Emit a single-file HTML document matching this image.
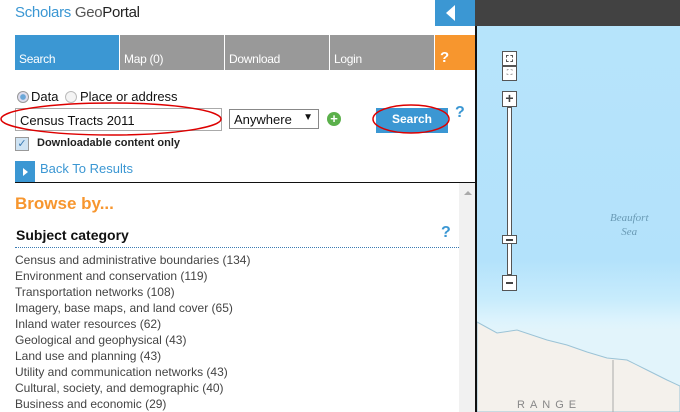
<!DOCTYPE html>
<html><head><meta charset="utf-8"><style>
*{margin:0;padding:0;box-sizing:border-box}
body{width:680px;height:412px;overflow:hidden;position:relative;background:#fff;font-family:"Liberation Sans",Arial,sans-serif}
.a{position:absolute}
.tab{position:absolute;top:35px;height:35px;color:#fff;font-size:12px;padding:17px 0 0 4px;letter-spacing:-0.3px}
.li{font-size:12px;color:#444;line-height:16px}
.zb{position:absolute;left:502px;width:15px;background:#fff;border:1px solid #555}
</style></head><body>
<div class="a" style="left:15px;top:4px;font-size:15px;color:#3b97d3;letter-spacing:-0.3px">Scholars <span style="color:#555">Geo</span><span style="color:#222">Portal</span></div>
<div class="a" style="left:435px;top:0;width:40px;height:26px;background:#3b97d3"></div>
<div class="a" style="left:446px;top:5px;width:0;height:0;border-top:8px solid transparent;border-bottom:8px solid transparent;border-right:9px solid #fff"></div>
<div class="tab" style="left:15px;width:104px;background:#3b97d3">Search</div>
<div class="tab" style="left:120px;width:104px;background:#999">Map (0)</div>
<div class="tab" style="left:225px;width:104px;background:#999">Download</div>
<div class="tab" style="left:330px;width:104px;background:#999">Login</div>
<div class="tab" style="left:435px;width:40px;background:#f7962e;font-weight:bold;font-size:15px;padding:14px 0 0 5px">?</div>
<div class="a" style="left:17px;top:91px;width:12px;height:12px;border-radius:50%;border:1px solid #999;background:radial-gradient(#6aa7d8 35%,#dde 45%)"></div>
<div class="a" style="left:31px;top:89px;font-size:13px;color:#111">Data</div>
<div class="a" style="left:65px;top:91px;width:12px;height:12px;border-radius:50%;border:1px solid #bbb;background:#f4f4f4"></div>
<div class="a" style="left:80px;top:89px;font-size:13px;color:#111">Place or address</div>
<div class="a" style="left:15px;top:108px;width:207px;height:23px;border:1px solid #aaa;font-size:13px;padding:4px 0 0 4px;color:#111">Census Tracts 2011</div>
<div class="a" style="left:229px;top:109px;width:90px;height:20px;border:1px solid #888;font-size:13px;padding:2px 0 0 4px;color:#111">Anywhere<span style="position:absolute;right:5px;top:2px;font-size:10px">▼</span></div>
<div class="a" style="left:327px;top:112px;width:14px;height:14px;border-radius:50%;background:#5bb04b;color:#fff;font-size:13px;font-weight:bold;text-align:center;line-height:14px">+</div>
<div class="a" style="left:376px;top:108px;width:72px;height:25px;background:#3b97d3;color:#fff;font-weight:bold;font-size:12px;text-align:center;line-height:23px">Search</div>
<div class="a" style="left:455px;top:104px;color:#3b97d3;font-weight:bold;font-size:16px">?</div>
<svg class="a" style="left:0;top:0" width="480" height="190"><ellipse cx="111" cy="119" rx="110" ry="16" fill="none" stroke="#d00" stroke-width="1.5"/><ellipse cx="411" cy="119" rx="38" ry="14" fill="none" stroke="#d00" stroke-width="1.5"/></svg>
<div class="a" style="left:15px;top:137px;width:14px;height:14px;border:1px solid #999;background:#cfe3f3;color:#3b7bb3;font-size:11px;text-align:center;line-height:12px">✓</div>
<div class="a" style="left:37px;top:137px;font-size:11px;font-weight:bold;color:#222">Downloadable content only</div>
<div class="a" style="left:15px;top:161px;width:20px;height:21px;background:#3b97d3"></div>
<div class="a" style="left:23px;top:168px;border-top:4px solid transparent;border-bottom:4px solid transparent;border-left:5px solid #fff"></div>
<div class="a" style="left:40px;top:161px;font-size:13px;color:#3b97d3">Back To Results</div>
<div class="a" style="left:15px;top:182px;width:460px;height:1px;background:#111"></div>
<div class="a" style="left:459px;top:183px;width:16px;height:229px;background:#f1f1f1"></div>
<div class="a" style="left:464px;top:191px;border-left:4px solid transparent;border-right:4px solid transparent;border-bottom:4px solid #aaa"></div>
<div class="a" style="left:15px;top:194px;font-size:17px;font-weight:bold;color:#f7962e">Browse by...</div>
<div class="a" style="left:16px;top:227px;font-size:14px;font-weight:bold;color:#111">Subject category</div>
<div class="a" style="left:441px;top:224px;color:#3b97d3;font-weight:bold;font-size:16px">?</div>
<div class="a" style="left:15px;top:247px;width:444px;border-top:1px dotted #3b7bb3"></div>
<div class="a" style="left:15px;top:252px">
<div class="li">Census and administrative boundaries (134)</div>
<div class="li">Environment and conservation (119)</div>
<div class="li">Transportation networks (108)</div>
<div class="li">Imagery, base maps, and land cover (65)</div>
<div class="li">Inland water resources (62)</div>
<div class="li">Geological and geophysical (43)</div>
<div class="li">Land use and planning (43)</div>
<div class="li">Utility and communication networks (43)</div>
<div class="li">Cultural, society, and demographic (40)</div>
<div class="li">Business and economic (29)</div>
</div>
<div class="a" style="left:475px;top:0;width:2px;height:412px;background:#111"></div>
<div class="a" style="left:477px;top:0;width:203px;height:412px;background:linear-gradient(#b7e4fb 0,#b3e2fb 260px,#c8ecfc 300px,#dcf3fd 320px,#e2f4fb 330px)"></div>
<svg class="a" style="left:477px;top:0" width="203" height="412"><path d="M0 322 L20 333 40 330 70 340 90 345 110 352 130 358 150 360 170 370 190 380 203 386 L203 412 L0 412Z" fill="#f4f1ec" stroke="#9bc3d6" stroke-width="1"/><line x1="136" y1="360" x2="136" y2="412" stroke="#aaa"/><text x="40" y="408" font-family="Liberation Sans" font-size="11" fill="#888" letter-spacing="5">RANGE</text></svg>
<div class="a" style="left:475px;top:0;width:205px;height:26px;background:#424242"></div>
<div class="zb" style="top:51px;height:15px"><div style="margin:3px;width:7px;height:7px;border:1px dashed #555"></div></div>
<div class="zb" style="top:66px;height:15px;font-size:8px;text-align:center;line-height:12px;color:#555">⛶</div>
<div class="zb" style="top:91px;height:16px;text-align:center;font-weight:bold;font-size:14px;line-height:13px;color:#444">+</div>
<div class="a" style="left:507px;top:107px;width:5px;height:168px;background:#fff;border:1px solid #555"></div>
<div class="zb" style="top:235px;height:9px"><div style="margin:3px 3px;height:2px;background:#444"></div></div>
<div class="zb" style="top:275px;height:16px"><div style="margin:6px 3px;height:2px;background:#444"></div></div>
<div class="a" style="left:610px;top:211px;font-family:'Liberation Serif',serif;font-style:italic;font-size:11px;color:#6a9ab5;text-align:center;line-height:14px">Beaufort<br>Sea</div>
</body></html>
